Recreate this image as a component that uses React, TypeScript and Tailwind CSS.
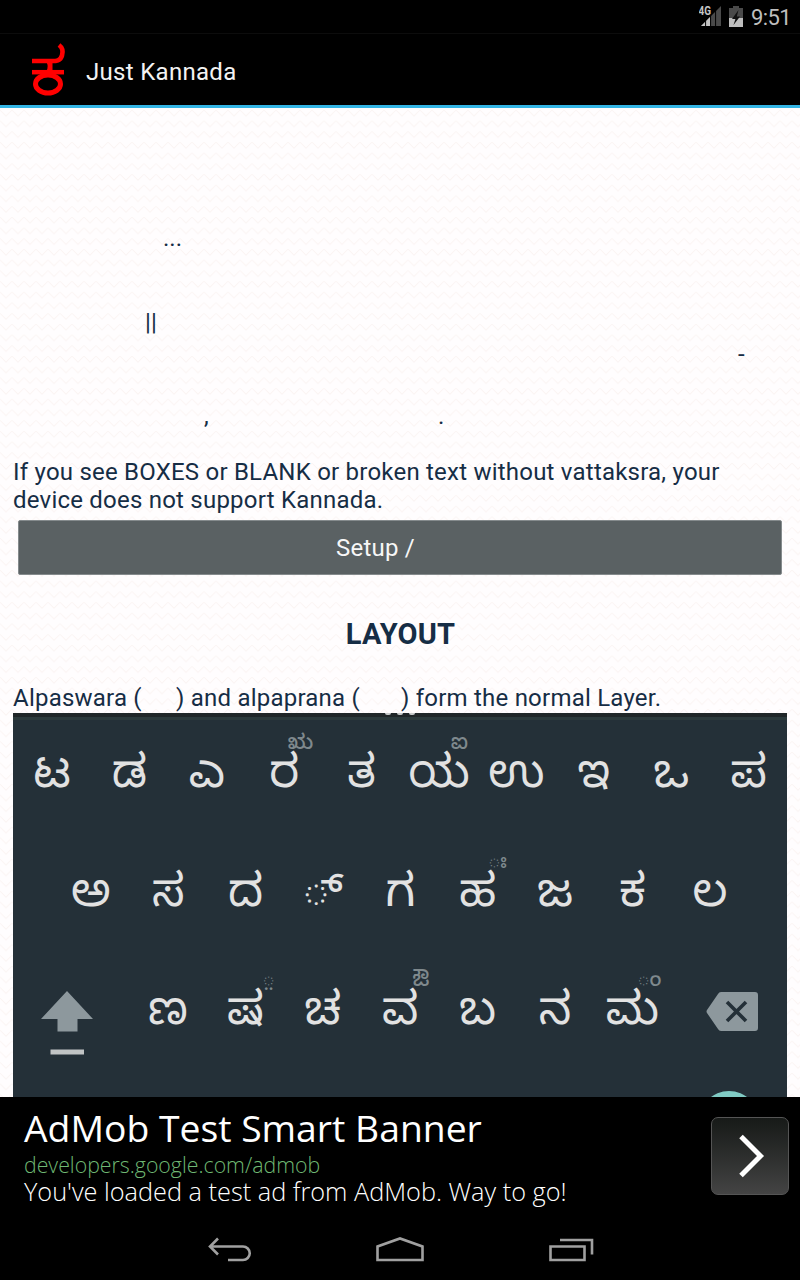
import React from "react";

type KeyDef = { main: string; hint?: string };

const rowOne: KeyDef[] = [
  { main: "ಟ" },
  { main: "ಡ" },
  { main: "ಎ" },
  { main: "ರ", hint: "ಋ" },
  { main: "ತ" },
  { main: "ಯ", hint: "ಐ" },
  { main: "ಉ" },
  { main: "ಇ" },
  { main: "ಒ" },
  { main: "ಪ" },
];

const rowTwo: KeyDef[] = [
  { main: "ಅ" },
  { main: "ಸ" },
  { main: "ದ" },
  { main: "್" },
  { main: "ಗ" },
  { main: "ಹ", hint: "ಃ" },
  { main: "ಜ" },
  { main: "ಕ" },
  { main: "ಲ" },
];

const rowThree: KeyDef[] = [
  { main: "ಣ" },
  { main: "ಷ", hint: "಼" },
  { main: "ಚ" },
  { main: "ವ", hint: "ಔ" },
  { main: "ಬ" },
  { main: "ನ" },
  { main: "ಮ", hint: "ಂ" },
];

function Key({ main, hint }: KeyDef) {
  return (
    <div className="relative flex w-[77.4px] shrink-0 items-center justify-center pl-[1px] font-['Noto_Sans_Kannada','Noto_Sans',sans-serif] text-[46px] leading-none font-[450] text-[#e2e2e2]">
      {main}
      {hint && <span className="absolute -top-[22px] right-[9px] text-[21px] leading-none font-medium text-[#7f898d]">{hint}</span>}
    </div>
  );
}

function StatusBar() {
  return (
    <div className="flex h-[34px] shrink-0 items-center justify-end border-b border-[#0c0c0c] pt-[1px] pr-[9px]">
      <svg width="24" height="24" viewBox="0 0 24 24" className="mr-[6px]">
        <path d="M2 21 L22 1 V21 Z" fill="#4a4a4a" />
        <path d="M2 21 L11 12 V21 Z" fill="#c4c4c4" />
        <path d="M6.6 15V22M11.6 9V22M16.6 4V22" stroke="#000" strokeWidth="1" />
        <rect x="0" y="0" width="11.500" height="11" fill="#000" />
        <text x="-0.5" y="10" fill="#c4c4c4" fontFamily="Roboto, sans-serif" fontSize="12.500" fontWeight="700" textLength="12.500" lengthAdjust="spacingAndGlyphs">4G</text>
      </svg>
      <svg width="14" height="22" viewBox="0 0 14 22" className="mr-[8px]">
        <path d="M4 0H10V2H14V12H0V2H4Z" fill="#4a4a4a" />
        <path d="M0 12H14V21H0Z" fill="#bebebe" />
        <path d="M9.5 4L3 13H6.4L4.5 19L11 10.5H7.8Z" fill="#111" />
      </svg>
      <span className="pt-[2px] text-[22px] leading-none tracking-[-0.6px] text-[#bebebe]">9:51</span>
    </div>
  );
}

function ActionBar() {
  return (
    <div className="flex h-[74px] shrink-0 items-center border-b-[3px] border-[#33b5e5] pl-[21px]">
      <svg width="55" height="64" viewBox="0 1 55 64" fill="none" stroke="#ff0000">
        <path d="M38 8 C41.500 10.500 42 15 41 18.500 C39.500 24 35 24 31 24 H11" strokeWidth="4.6" />
        <path d="M26.500 24 Q30 29.500 26.500 35 M30 24 V35" strokeWidth="3" />
        <path d="M11 35.200H43" strokeWidth="4.5" />
        <ellipse cx="27" cy="47" rx="12.500" ry="9" strokeWidth="5" />
      </svg>
      <span className="pt-[4px] pl-[10px] text-[24px] leading-none tracking-[0.3px] text-[#f3f3f3]">Just Kannada</span>
    </div>
  );
}

function Texture() {
  return (
    <svg className="absolute inset-0 h-full w-full">
      <defs>
        <pattern id="zigzag" width="12" height="10.700" patternUnits="userSpaceOnUse">
          <path d="M0 2 L6 8 L12 2" fill="none" stroke="#fbf5f4" strokeWidth="1" />
        </pattern>
      </defs>
      <rect width="100%" height="100%" fill="url(#zigzag)" />
    </svg>
  );
}

function Keyboard() {
  return (
    <div className="mx-[13px] flex h-[384px] flex-col overflow-hidden bg-[#243038]">
      <div className="flex h-[4px] shrink-0 items-start justify-center gap-[6px] bg-[#202628]">
        <i className="h-[2px] w-[6px] rounded-b bg-[#c8caca]" />
        <i className="h-[2px] w-[6px] rounded-b bg-[#c8caca]" />
        <i className="h-[2px] w-[6px] rounded-b bg-[#c8caca]" />
      </div>
      <div className="h-[3px] shrink-0 bg-[#2c3a3c]" />
      <div className="flex h-[122px] shrink-0 items-center">
        {rowOne.map((k) => <Key key={k.main} {...k} />)}
      </div>
      <div className="flex h-[116px] shrink-0 items-center justify-center">
        {rowTwo.map((k) => <Key key={k.main} {...k} />)}
      </div>
      <div className="flex h-[120px] shrink-0 items-center">
        <div className="flex w-[116px] shrink-0 justify-center pt-[7px] pr-[8px]">
          <svg width="52" height="68" viewBox="0 0 52 68">
            <path d="M26 3L52 31H36.5V43.5H16.5V31H0Z" fill="#8d989d" />
            <path d="M9.500 64H43" stroke="#c1c4c5" strokeWidth="5" />
          </svg>
        </div>
        {rowThree.map((k) => <Key key={k.main} {...k} />)}
        <div className="flex w-[116px] shrink-0 justify-center pb-[13px] pl-[8px]">
          <svg width="53" height="40" viewBox="0 0 53 40">
            <path d="M15 0H49Q52 0 52 3V36Q52 39 49 39H15Q13 39 12 37L1 21Q0 19.5 1 18L12 2Q13 0 15 0Z" fill="#8d989d" />
            <path d="M21 10L40 29M40 10L21 29" stroke="#243038" strokeWidth="3.6" />
          </svg>
        </div>
      </div>
      <div className="flex shrink-0 justify-end pt-[13px] pr-[28px]">
        <div className="size-[60px] shrink-0 rounded-full bg-[#80cbc4]" />
      </div>
    </div>
  );
}

function Content() {
  return (
    <main className="relative h-[989px] shrink-0 overflow-hidden bg-[#fffdfe] text-[24px] leading-[28px] tracking-[0.22px] text-[#162d45]">
      <Texture />
      <div className="relative flex flex-col">
        <div className="mt-[116px] h-[32px] pl-[163px] tracking-[0px]">...</div>
        <div className="mt-[52px] h-[32px] pl-[145px]">||</div>
        <div className="h-[32px] pl-[738px]">-</div>
        <div className="mt-[30px] flex h-[32px]">
          <span className="w-[438px] pl-[204px]">,</span>
          <span>.</span>
        </div>
        <p className="mt-[24px] pl-[13px] whitespace-nowrap">
          If you see BOXES or BLANK or broken text without vattaksra, your
          <br />
          device does not support Kannada.
        </p>
        <button className="mx-[18px] mt-[6px] h-[55px] rounded-[2px] border border-[#858b8d] bg-[#5a6163] pr-[49px] text-center text-[#f7f7f7]">
          Setup /
        </button>
        <h2 className="mt-[43px] pl-[1px] text-center text-[29px] leading-[32px] font-bold">LAYOUT</h2>
        <div className="mt-[34px] flex h-[29px] pl-[13px] whitespace-nowrap">
          <span className="w-[163px]">Alpaswara (</span>
          <span className="w-[225px]">) and alpaprana (</span>
          <span>) form the normal Layer.</span>
        </div>
        <Keyboard />
      </div>
    </main>
  );
}

function AdBanner() {
  return (
    <div className="flex h-[120px] shrink-0 items-start justify-between pr-[11px] pl-[24px] font-['Open_Sans',sans-serif]">
      <div className="flex flex-col pt-[9px] whitespace-nowrap">
        <span className="text-[37.3px] leading-[44px] text-white">AdMob Test Smart Banner</span>
        <span className="pt-[2px] text-[21.3px] leading-[25px] font-light text-[#6fb873]">developers.google.com/admob</span>
        <span className="text-[25.3px] leading-[28px] font-light text-white">You've loaded a test ad from AdMob. Way to go!</span>
      </div>
      <div className="mt-[20px] flex size-[78px] items-center justify-center rounded-[7px] border border-[#555] bg-linear-to-b from-[#171a18] to-[#444]">
        <svg width="26" height="44" viewBox="0 0 26 44" fill="none" className="ml-[4px]">
          <path d="M2 2.5L21.5 22L2 41.5" stroke="#fff" strokeWidth="5" />
        </svg>
      </div>
    </div>
  );
}

function NavBar() {
  return (
    <nav className="flex flex-1 items-center pt-[7px] pl-[208px]">
      <svg width="386" height="30" viewBox="0 0 386 30" fill="none" stroke="#a0a0a0" strokeWidth="2.6">
        <path d="M10 1.500L2 9.500L10 17.500M2 9.500H35A6.500 6.500 0 0 1 35 23H20" />
        <path d="M169.500 23V9.500L192 1.500L214.500 9.500V23Z" />
        <path d="M342.500 9.500H376.500V23H342.500ZM352 3H384V17.500" />
      </svg>
    </nav>
  );
}

export default function App() {
  return (
    <div className="flex h-[1280px] w-[800px] flex-col overflow-hidden bg-black font-[Roboto,sans-serif]">
      <StatusBar />
      <ActionBar />
      <Content />
      <AdBanner />
      <NavBar />
    </div>
  );
}
